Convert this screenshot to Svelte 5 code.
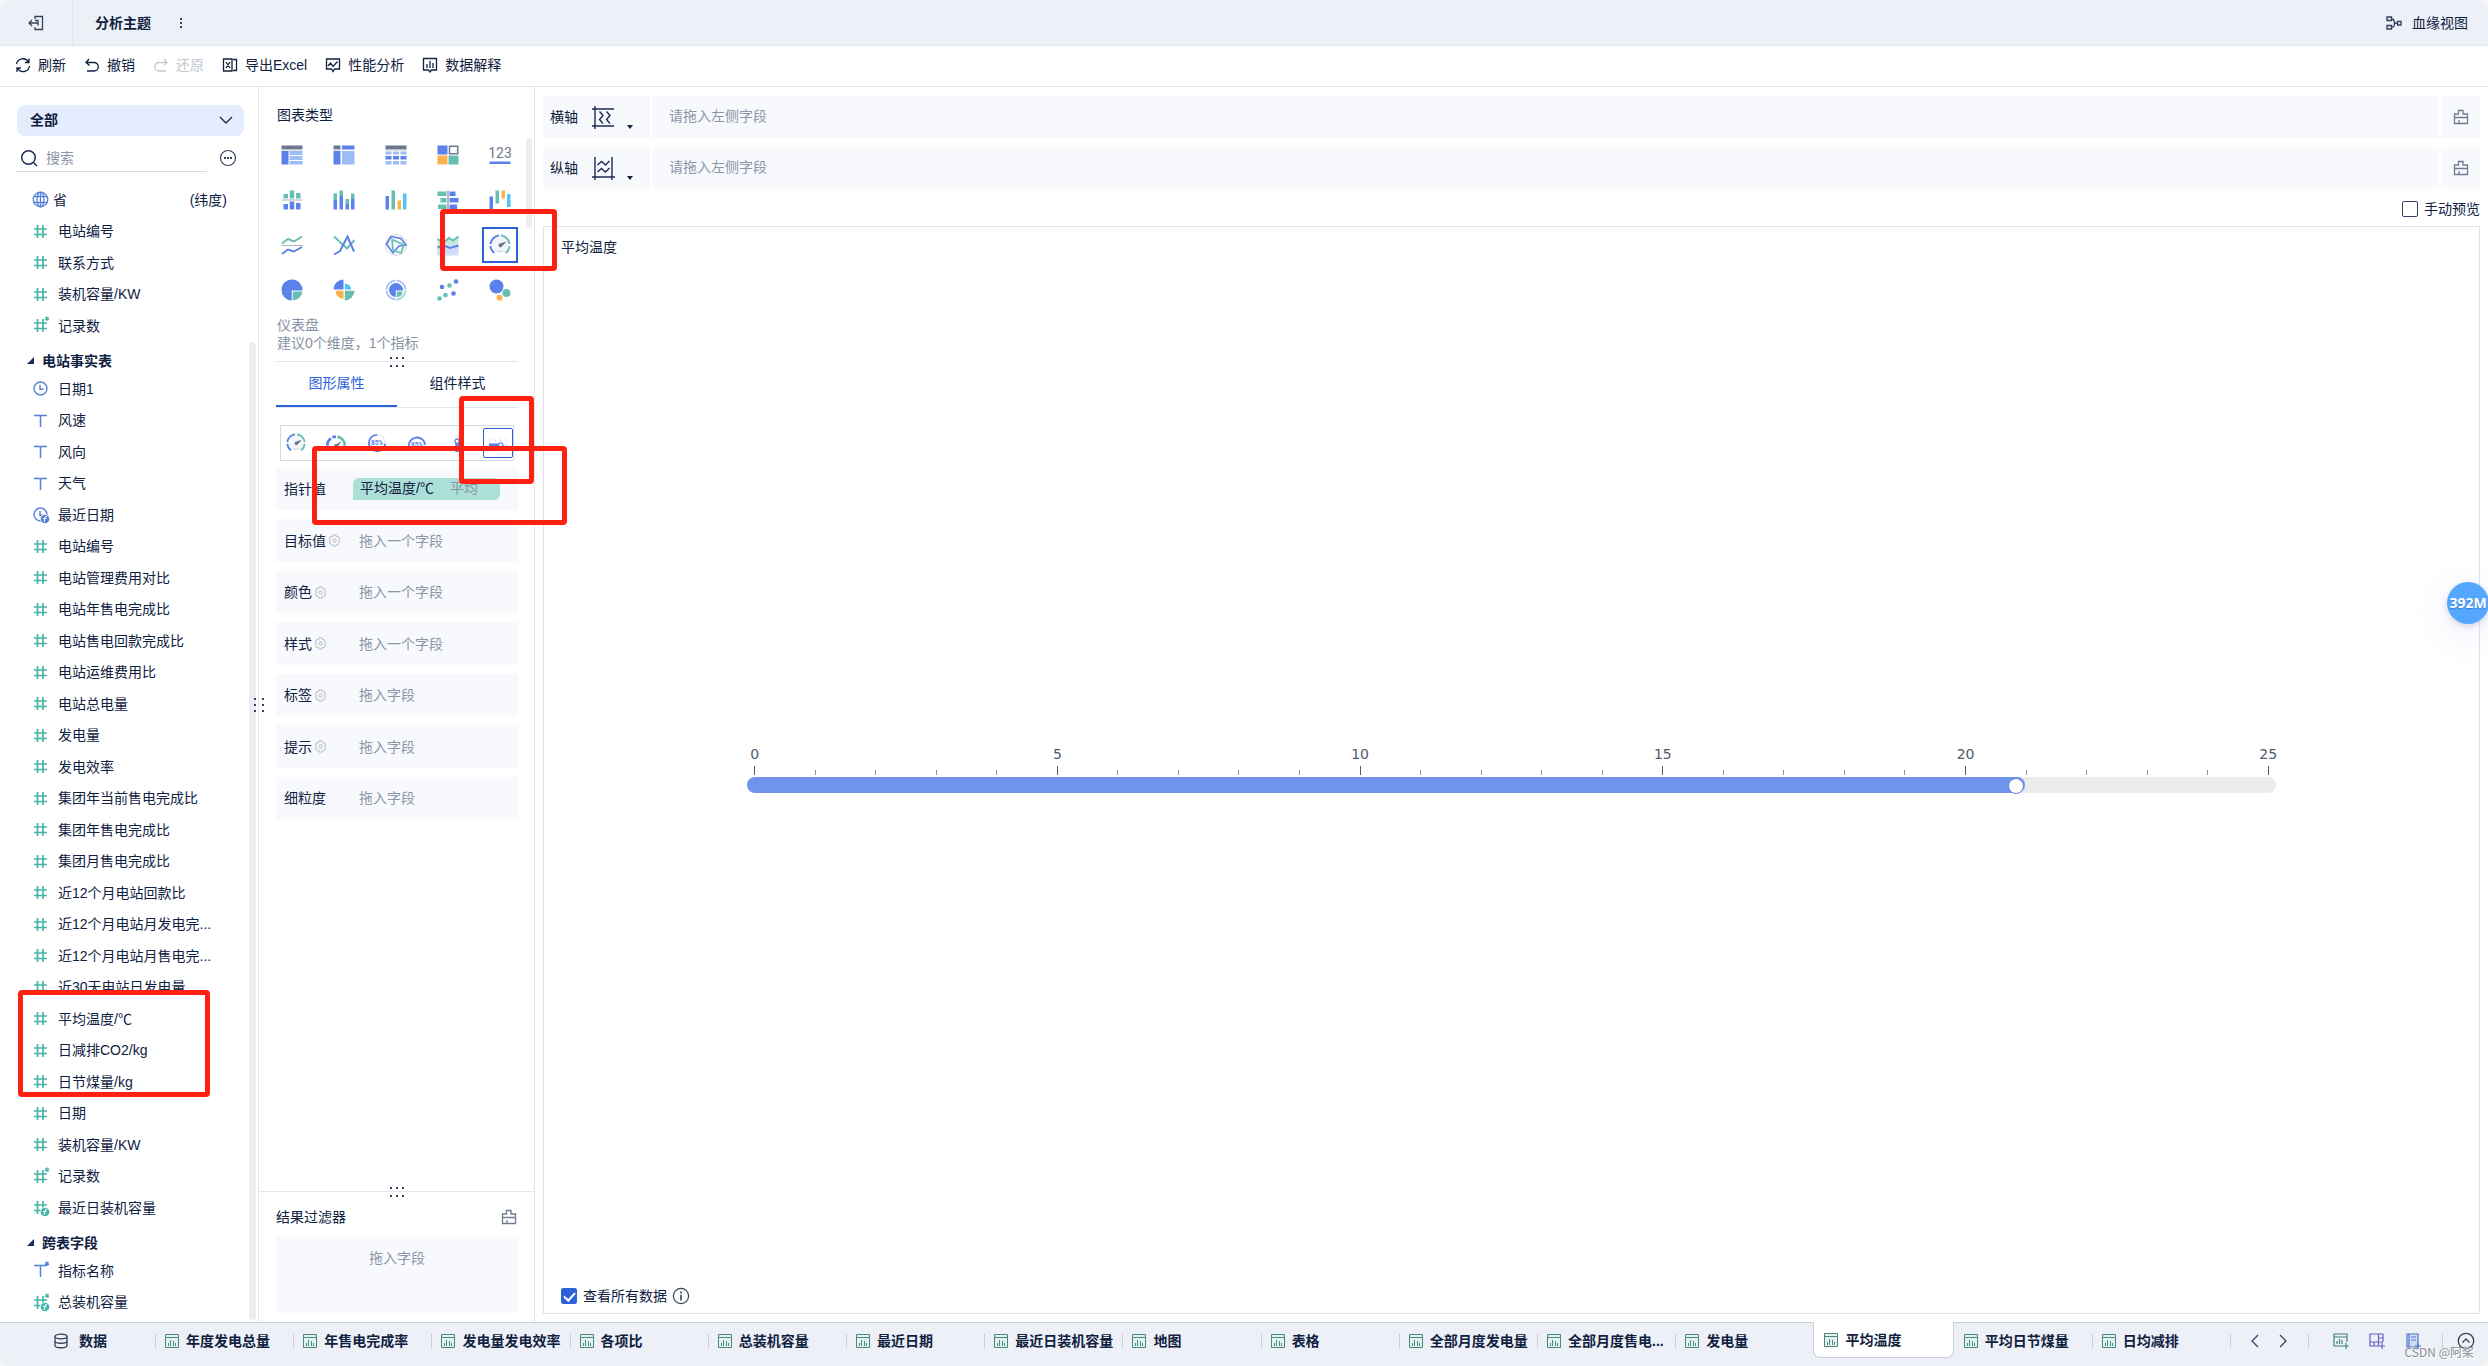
<script lang="ts">
  type Field = { icon: string; name: string; note?: string }
  type Group = { title?: string; fields: Field[] }

  const num = (name: string): Field => ({ icon: 'num', name })

  const groups: Group[] = [
    {
      fields: [
        { icon: 'globe', name: '省', note: '(纬度)' },
        num('电站编号'),
        num('联系方式'),
        num('装机容量/KW'),
        { icon: 'numStar', name: '记录数' },
      ],
    },
    {
      title: '电站事实表',
      fields: [
        { icon: 'clock', name: '日期1' },
        { icon: 'text', name: '风速' },
        { icon: 'text', name: '风向' },
        { icon: 'text', name: '天气' },
        { icon: 'clockF', name: '最近日期' },
        num('电站编号'),
        num('电站管理费用对比'),
        num('电站年售电完成比'),
        num('电站售电回款完成比'),
        num('电站运维费用比'),
        num('电站总电量'),
        num('发电量'),
        num('发电效率'),
        num('集团年当前售电完成比'),
        num('集团年售电完成比'),
        num('集团月售电完成比'),
        num('近12个月电站回款比'),
        num('近12个月电站月发电完...'),
        num('近12个月电站月售电完...'),
        num('近30天电站日发电量'),
        num('平均温度/℃'),
        num('日减排CO2/kg'),
        num('日节煤量/kg'),
        num('日期'),
        num('装机容量/KW'),
        { icon: 'numStar', name: '记录数' },
        { icon: 'numF', name: '最近日装机容量' },
      ],
    },
    {
      title: '跨表字段',
      fields: [
        { icon: 'textStar', name: '指标名称' },
        { icon: 'numStarF', name: '总装机容量' },
      ],
    },
  ]

  const B = '#5a82ea'
  const L = '#9dbbf5'
  const G = '#67bfb3'
  const O = '#fcb24c'
  const D = '#6b7890'
  const C = '#53c3f5'

  const r = (x: number, y: number, w: number, h: number, fill: string) =>
    `<rect x="${x}" y="${y}" width="${w}" height="${h}" fill="${fill}"/>`
  const line = (pts: string, stroke: string, w = 2) =>
    `<polyline points="${pts}" fill="none" stroke="${stroke}" stroke-width="${w}"/>`

  const hash = '<path d="M6.5 3v13M12 3v13M3 7h13M3 12.500h13" fill="none" stroke="#45b5a8" stroke-width="1.700"/>'
  const tee = '<path d="M3 4.500h13M9.500 4.500v11.500" fill="none" stroke="#5580d8" stroke-width="1.500"/>'
  const star = (c: string) =>
    `<path d="M16 .5v4.500M14 1.600l4 2.300M18 1.600l-4 2.300" stroke="${c}" stroke-width="1.200"/>`
  const func = (c: string) =>
    `<circle cx="14" cy="14" r="5" fill="#fff"/><circle cx="14" cy="14" r="4.300" fill="${c}"/><path d="M16 11.500q-2-.5-2.200 1.500l-.6 4M12 13.500h3.500" fill="none" stroke="#fff"/>`
  const clock = '<circle cx="9.500" cy="9.500" r="6.500" fill="none" stroke="#5580d8" stroke-width="1.400"/><path d="M9 6v4.300h3.500" fill="none" stroke="#5580d8" stroke-width="1.400"/>'

  const fieldIcons: Record<string, string> = {
    num: hash,
    numStar: hash + star('#45b5a8'),
    numF: hash + func('#45b5a8'),
    numStarF: hash + star('#45b5a8') + func('#45b5a8'),
    text: tee,
    textStar: tee + star('#5580d8'),
    clock,
    clockF: clock + func('#5580d8'),
    globe: '<g fill="none" stroke="#5580d8" stroke-width="1.300"><circle cx="9.500" cy="9.500" r="7.300"/><ellipse cx="9.500" cy="9.500" rx="3.500" ry="7.300"/><path d="M3 6.500h13M3 12.500h13M9.500 2v15"/></g>',
  }

  const dial = '<circle cx="11" cy="11" r="8" fill="#f3f5f8"/><path d="M10 1.500A9.500 9.500 0 0 0 1.500 10M1.500 12A9.500 9.500 0 0 0 5.500 19" fill="none" stroke="#5a82ea" stroke-width="2"/><path d="M12 1.500A9.500 9.500 0 0 1 20.500 10M20.500 12A9.500 9.500 0 0 1 16.500 19" fill="none" stroke="#67bfb3" stroke-width="2"/><path d="M17.500 7.500l-5 5.500a2 2 0 1 1-2-3.500z" fill="#6b7890"/><path d="M8 17.500h6" stroke="#ccd2dc"/>'

  const chartTypes = [
    { name: '分组表', svg: r(0.5, 1.5, 21, 4, D) + r(0.5, 5.5, 21, 1, '#c3c9d3') + r(0.5, 7, 7, 13.5, B) + r(8.5, 7, 13, 4, L) + r(8.5, 12, 13, 4, L) + r(8.5, 17, 13, 3.5, L) },
    { name: '交叉表', svg: r(0.5, 1.5, 7, 4, D) + r(0.5, 5.5, 7, 1, '#c3c9d3') + r(9, 1.5, 12.5, 4, B) + r(0.5, 7, 7, 13.5, B) + r(9, 7, 12.5, 13.5, L) },
    { name: '明细表', svg: r(0.5, 1.5, 21, 4, D) + r(0.5, 5.5, 21, 1, '#c3c9d3') + [0.5, 8, 15.5].map((x) => r(x, 7.5, 6, 3, L) + r(x, 12, 6, 3.5, B) + r(x, 17, 6, 3.5, L)).join('') },
    { name: '颜色表格', svg: r(0.5, 1.5, 10, 9, B) + '<rect x="12.500" y="2.300" width="8.200" height="7.400" fill="none" stroke="#6b7890" stroke-width="1.500"/>' + r(0.5, 11.5, 10, 9, O) + r(11.5, 11.5, 10, 9, G) },
    { name: '指标卡', svg: '<text x="11" y="13.500" text-anchor="middle" font-family="Roboto, sans-serif" font-size="14" fill="#6b7890">123</text>' + r(0.5, 17.5, 21, 2.5, B) },
    { name: '对比柱状图', svg: r(0.5, 10.5, 21, 1, '#aab2c0') + r(2.5, 5, 4.5, 4.5, G) + r(8.7, 1.5, 4.5, 8, G) + r(15, 4, 4.5, 5.5, G) + r(2.5, 15, 4.5, 5.5, B) + r(8.7, 12.5, 4.5, 8, B) + r(15, 14, 4.5, 6.5, B) },
    { name: '堆积柱状图', svg: [[0.5, 4.5, 11], [6.5, 1.5, 7], [12.5, 10, 15], [18, 4.5, 10]].map(([x, a, b]) => r(x, a, 3.5, b - a, G) + r(x, b, 3.5, 20.5 - b, B)).join('') },
    { name: '分组柱状图', svg: r(0.5, 7, 3.5, 13.5, B) + r(6.5, 1.5, 3.5, 19, G) + r(12.5, 11.5, 3.5, 9, O) + r(18, 4.5, 3.5, 16, C) },
    { name: '对比条形图', svg: r(10.5, 1.5, 1, 19, D) + r(0.5, 2.5, 9, 4.5, G) + r(3.5, 9, 6, 4.5, G) + r(1, 15.5, 8.5, 4.5, G) + r(12.5, 2.5, 6, 4.5, B) + r(12.5, 9, 9, 4.5, B) + r(12.5, 15.5, 7.5, 4.5, B) },
    { name: '瀑布图', svg: r(0.5, 7.5, 3.5, 13, B) + r(6.5, 1.5, 3.5, 13, G) + r(12.5, 1.5, 3.5, 8, O) + r(18, 5, 3.5, 13, C) },
    { name: '折线图', svg: line('1,9.5 7,5 13,7.5 21,2.5', G) + r(0.5, 11, 21, 1, '#aab2c0') + line('1,20 7,15.5 13,17.5 21,13', B) },
    { name: '范围面积图', svg: line('1,2.5 14,14.5 21.5,6', G) + line('1,20.5 7,17 14.5,2.5 21,17.5', B) },
    { name: '雷达图', svg: '<circle cx="11" cy="11" r="10.500" fill="#f8f9fb" stroke="#d6dae2"/><path d="M6 2.500l10 2 5 6.500-7 1-6 7L1.500 10z" fill="none" stroke="#5a82ea" stroke-width="1.700"/><path d="M7 5.500L19 11l-3 8-8-3z" fill="none" stroke="#67bfb3" stroke-width="1.700"/>' },
    { name: '面积图', svg: '<path d="M.5 4l6 4 6-4 4 2 5-4v8l-6 3-8-2-7 2z" fill="#c7e6e1"/><path d="M.5 13l6-2 7 3 8-3v10.500H.5z" fill="#cfdbf8"/>' + line('0.5,5 6,9 12,4 16,6.5 21.5,2.5', G) + line('0.5,13.500 7,11.500 13,14 21.500,11.500', B) },
    { name: '仪表盘', svg: dial },
    { name: '饼图', svg: '<path d="M10.700 11.500V21.500A10.500 10.500 0 1 1 21.500 11.500z" fill="#5a82ea"/><path d="M11.700 12.500h9.800a10 10 0 0 1-9.800 9z" fill="#67bfb3"/>' },
    { name: '玫瑰图', svg: '<path d="M10.500 10.500V.5a10 10 0 0 0-10 10z" fill="#5a82ea"/><path d="M11.800 10.500V4.500a7 6.500 0 0 1 6.500 6z" fill="#53c3f5"/><path d="M11.800 11.800h9.700a10 10 0 0 1-9.700 9.700z" fill="#67bfb3"/><path d="M10.500 11.800H2.500a8 8 0 0 0 8 8z" fill="#fcb24c"/>' },
    { name: '多层饼图', svg: '<circle cx="11" cy="11" r="9.500" fill="none" stroke="#b1c4f5" stroke-width="2"/><path d="M20.500 11.500a9.500 9.500 0 0 1-9 9" fill="none" stroke="#b3dfd9" stroke-width="2"/><path d="M11 0v3M11 19v3M0 11h3M19 11h3" stroke="#fff"/><path d="M10.700 11.500v6.500a7 7 0 1 1 7.300-6.500z" fill="#5a82ea"/><path d="M11.700 12.500h6a6 6 0 0 1-6 5.500z" fill="#67bfb3"/>' },
    { name: '散点图', svg: [[2.5, 19.5, G], [8.5, 16, G], [5, 8, B], [12.5, 6.5, G], [16.5, 14.5, B], [19, 2.5, B]].map(([x, y, c]) => `<circle cx="${x}" cy="${y}" r="2.300" fill="${c}"/>`).join('') },
    { name: '气泡图', svg: '<circle cx="7.500" cy="7.500" r="7" fill="#5a82ea"/><circle cx="17.500" cy="14" r="4" fill="#67bfb3"/><circle cx="10.500" cy="18.800" r="3" fill="#fcb24c"/>' },
  ]

  const percent = (y: number) =>
    `<text x="11" y="${y}" text-anchor="middle" font-family="Roboto, sans-serif" font-size="7" font-weight="700" fill="#5a82ea">85%</text>`

  const gaugeStyles = [
    { name: '多指针仪表盘', svg: dial },
    { name: '半圆仪表盘', svg: '<path d="M1.500 14A9.500 9.500 0 0 1 5.500 6M7 5A9.500 9.500 0 0 1 11 4" fill="none" stroke="#5a82ea" stroke-width="3"/><path d="M12.500 4A9.500 9.500 0 0 1 20.500 14" fill="none" stroke="#67bfb3" stroke-width="3"/><path d="M17 8.500l-4 6.500-3-1.500z" fill="#6b7890"/><circle cx="11" cy="14" r="2" fill="#6b7890"/>' },
    { name: '百分比圆环', svg: '<circle cx="11" cy="11" r="9" fill="none" stroke="#e9ecf1" stroke-width="2"/><path d="M11 2a9 9 0 1 0 9 10" fill="none" stroke="#5a82ea" stroke-width="2"/>' + percent(13.5) },
    { name: '百分比刻度槽', svg: '<path d="M2 15A9 9 0 1 1 20 13" fill="none" stroke="#5a82ea" stroke-width="2"/>' + percent(15) },
    { name: '竖向试管', svg: '<path d="M10 2v18" stroke="#e9ecf1" stroke-width="4"/><path d="M10 9v12" stroke="#5a82ea" stroke-width="4"/><circle cx="10" cy="9" r="2.300" fill="#fff" stroke="#5a82ea" stroke-width="1.300"/><path d="M13 3h3M13 8h3M13 13h3" stroke="#d4d8e0"/>' },
    { name: '横向试管', svg: '<path d="M1 13h20" stroke="#e9ecf1" stroke-width="3"/><path d="M1 13h13" stroke="#5a82ea" stroke-width="3"/><circle cx="14" cy="13" r="2.300" fill="#fff" stroke="#5a82ea" stroke-width="1.300"/><path d="M2 6v4M8 7v3M14 6v4M20 6v4" stroke="#d4d8e0"/>' },
  ]

  const shelves = [
    { label: '目标值', gear: true, hint: '拖入一个字段' },
    { label: '颜色', gear: true, hint: '拖入一个字段' },
    { label: '样式', gear: true, hint: '拖入一个字段' },
    { label: '标签', gear: true, hint: '拖入字段' },
    { label: '提示', gear: true, hint: '拖入字段' },
    { label: '细粒度', gear: false, hint: '拖入字段' },
  ]

  const tools = [
    { name: '刷新', path: 'M1.500 7A6.500 6.500 0 0 1 13.500 5M14.500 9A6.500 6.500 0 0 1 2.500 11.500M14 1.500V5.500h-4M2 15v-4h4' },
    { name: '撤销', path: 'M5 2L2 5.500 5.500 8.500M2 5.500h8a4 4 0 0 1 0 8.500H3' },
    { name: '还原', path: 'M11 2l3 3.500-3.500 3M14 5.500H6A4 4 0 0 0 6 14h7', disabled: true },
    { name: '导出Excel', path: 'M10 2H1.500v12H10zM11 2.500h3.500v11H11M4 5l4 6M8 5l-4 6' },
    { name: '性能分析', path: 'M1.500 2h13v10h-5L8 14.500 6.500 12h-5zM3 9l2.500-3L8 9.500l4.500-5' },
    { name: '数据解释', path: 'M1.500 1.500h13V13h-5L8 15l-1.500-2h-5zM5 7v4M8 4v7M11 6v5' },
  ]

  const axes = [
    { name: '横轴', path: 'M3 0v23M0 3h22M0 20h22M7.500 5.500l3.500 4-3.500 4 3.500 4M14.500 5.500l3.500 4-3.500 4 3.500 4' },
    { name: '纵轴', path: 'M3 0v23M20 0v23M0 20h23M5.500 8l4-3.500 4 3.500 4-4M5.500 15l4-3.500 4 3.500 4-4' },
  ]

  const sheets = [
    '年度发电总量', '年售电完成率', '发电量发电效率', '各项比', '总装机容量',
    '最近日期', '最近日装机容量', '地图', '表格', '全部月度发电量',
    '全部月度售电...', '发电量', '平均温度', '平均日节煤量', '日均减排',
  ]

  const max = 25
  const value = 20.85
  const ticks = Array.from({ length: max + 1 }, (_, i) => i)

  let chartType = $state('仪表盘')
  let gaugeStyle = $state('横向试管')
  let sheet = $state('平均温度')
  let manual = $state(false)
  let showAll = $state(true)
</script>

{#snippet broom()}
  <svg class="i16" viewBox="0 0 16 16" fill="none" stroke="#6f7b90" stroke-width="1.3">
    <path d="M1.500 5h4V1.500h4.500V5h4.500v9.500h-13zM1.500 8.500h13M6 14.500V11" />
  </svg>
{/snippet}

{#snippet grip()}
  <span class="grip">{#each [0, 1, 2, 3, 4, 5] as d (d)}<i></i>{/each}</span>
{/snippet}

<div class="app">
  <header class="topbar">
    <button class="exit" aria-label="退出">
      <svg class="i16" viewBox="0 0 16 16" fill="none" stroke="#34425c" stroke-width="1.3">
        <path d="M7 4V1.500h7.500v13H7V12M1 8h9M4 5L1 8l3 3M7 5.500h3v5" />
      </svg>
    </button>
    <h1>分析主题</h1>
    <button class="dots" aria-label="更多">
      <svg class="i16" viewBox="0 0 16 16" fill="#34425c"><path d="M7 3h2v2H7zM7 7h2v2H7zM7 11h2v2H7z" /></svg>
    </button>
    <button class="lineage">
      <svg class="i16" viewBox="0 0 16 16" fill="none" stroke="#34425c" stroke-width="1.4">
        <path d="M1 2h4.500v3.500H1zM1 10.500h4.500V14H1zM11.500 6.500H15V10h-3.500zM5.500 4q3 0 3 4.200t-3 4M8.500 8.200h3" />
      </svg>
      血缘视图
    </button>
  </header>

  <nav class="toolbar">
    {#each tools as tool (tool.name)}
      <button disabled={tool.disabled}>
        <svg class="i16" viewBox="0 0 16 16" fill="none" stroke="currentColor" stroke-width="1.3"><path d={tool.path} /></svg>
        {tool.name}
      </button>
    {/each}
  </nav>

  <main>
    <aside class="fields">
      <label class="scope">
        <select aria-label="字段范围"><option>全部</option></select>
        <svg class="i16" viewBox="0 0 16 16" fill="none" stroke="#1b2d50" stroke-width="1.4"><path d="M2 5l6 6 6-6" /></svg>
      </label>
      <div class="search">
        <label>
          <svg viewBox="0 0 18 18" fill="none" stroke="#1b2d50" stroke-width="1.5"><circle cx="8.5" cy="8.5" r="6.8" /><path d="M13.500 13.500l3.500 3.500" /></svg>
          <input type="search" placeholder="搜索" aria-label="搜索" />
        </label>
        <button aria-label="更多选项">
          <svg viewBox="0 0 18 18" fill="none" stroke="#34425c" stroke-width="1.2"><circle cx="9" cy="9" r="7.5" /><path d="M5 9h2M8 9h2M11 9h2" stroke-width="1.8" /></svg>
        </button>
      </div>
      <div class="tree">
        <div class="list">
          {#each groups as group, g (g)}
            {#if group.title}
              <h2><svg viewBox="0 0 7 7"><path d="M7 0v7H0z" fill="#1b2d50" /></svg>{group.title}</h2>
            {/if}
            <ul>
              {#each group.fields as field, f (f)}
                <li class:geo={field.icon === 'globe'}>
                  <svg viewBox="0 0 19 19">{@html fieldIcons[field.icon]}</svg>
                  <span>{field.name}</span>
                  {#if field.note}<em>{field.note}</em>{/if}
                </li>
              {/each}
            </ul>
          {/each}
        </div>
        <div class="scroll"></div>
      </div>
      <div class="grip-side">{@render grip()}</div>
    </aside>

    <section class="config">
      <h3>图表类型</h3>
      <div class="types">
        <div class="type-grid">
          {#each chartTypes as type (type.name)}
            <button class:selected={type.name === chartType} aria-label={type.name} onclick={() => (chartType = type.name)}>
              <svg viewBox="0 0 22 22">{@html type.svg}</svg>
            </button>
          {/each}
        </div>
        <div class="scroll"></div>
      </div>
      <p class="desc">仪表盘<br />建议0个维度，1个指标</p>
      <div class="split">{@render grip()}</div>
      <div class="tabs">
        <button class="on">图形属性</button>
        <button>组件样式</button>
      </div>
      <div class="styles">
        {#each gaugeStyles as style (style.name)}
          <button class:selected={style.name === gaugeStyle} aria-label={style.name} onclick={() => (gaugeStyle = style.name)}>
            <svg viewBox="0 0 22 22">{@html style.svg}</svg>
          </button>
        {/each}
      </div>
      <div class="shelves">
        <div class="shelf">
          <span class="name">指针值</span>
          <span class="pill">平均温度/℃ <em>平均</em></span>
        </div>
        {#each shelves as shelf (shelf.label)}
          <div class="shelf">
            <span class="name">
              {shelf.label}
              {#if shelf.gear}
                <svg viewBox="0 0 14 14" fill="none" stroke="#c3c8d1" stroke-width="1.2"><path d="M5.500 1h3l.5 1.700 2 .1 1.500 2.600L11.500 7l1 1.600L11 11.200l-2 .1L8.500 13h-3L5 11.300l-2-.1L1.500 8.600l1-1.600-1-1.600L3 2.800l2-.1z" /><circle cx="7" cy="7" r="1.8" /></svg>
              {/if}
            </span>
            <span class="hint">{shelf.hint}</span>
          </div>
        {/each}
      </div>
      <div class="filter">
        <div class="split wide">{@render grip()}</div>
        <div class="filter-head">
          <span>结果过滤器</span>
          {@render broom()}
        </div>
        <div class="drop">拖入字段</div>
      </div>
    </section>

    <section class="stage">
      {#each axes as axis (axis.name)}
        <div class="axis">
          <div class="axis-name">
            <span>{axis.name}</span>
            <button aria-label="{axis.name}设置">
              <svg viewBox="0 0 23 23" fill="none" stroke="#1b2d50" stroke-width="1.4"><path d={axis.path} /></svg>
              <svg class="caret" viewBox="0 0 6 4"><path d="M0 0h6L3 4z" fill="#0f2145" /></svg>
            </button>
          </div>
          <div class="axis-drop">请拖入左侧字段</div>
          <button class="axis-clear" aria-label="清空{axis.name}">{@render broom()}</button>
        </div>
      {/each}
      <div class="preview">
        <label><input type="checkbox" bind:checked={manual} />手动预览</label>
      </div>
      <div class="canvas">
        <h3>平均温度</h3>
        <div class="chart">
          <div class="ticks">
            {#each ticks as t (t)}
              <div class="tick" class:major={t % 5 === 0}>
                {#if t % 5 === 0}<span>{t}</span>{/if}
                <i></i>
              </div>
            {/each}
          </div>
          <div class="track">
            <div class="scale"><div class="fill" style="width: {(value / max) * 100}%"></div></div>
          </div>
        </div>
        <div class="all">
          <label><input type="checkbox" bind:checked={showAll} />查看所有数据</label>
          <svg viewBox="0 0 18 18" fill="none" stroke="#34425c" stroke-width="1.2"><circle cx="9" cy="9" r="7.6" /><path d="M9 4.500v2M9 7.800v5.700" stroke-width="1.600" /></svg>
        </div>
      </div>
    </section>
  </main>

  <footer>
    <button class="data">
      <svg class="i16" viewBox="0 0 16 16" fill="none" stroke="#34425c" stroke-width="1.3"><ellipse cx="8" cy="3.500" rx="6" ry="2.300" /><path d="M2 3.500v9c0 3 12 3 12 0v-9M2 8c0 3 12 3 12 0" /></svg>
      数据
    </button>
    <div class="sheets">
      {#each sheets as name (name)}
        <button class:active={name === sheet} onclick={() => (sheet = name)}>
          <svg viewBox="0 0 14 14" fill="none" stroke="#4b877e"><path d="M.5.5h13v13H.5z" fill="#e3f1ef" /><path d="M.5 3.500h13" /><path d="M3.500 12V9M5.500 12V6M8.500 12V7M10.500 12V9" stroke="#3f9184" /></svg>
          {name}
        </button>
      {/each}
    </div>
    <div class="pager">
      <button aria-label="上一页"><svg viewBox="0 0 8 14"><path d="M7 1L1 7l6 6" /></svg></button>
      <button aria-label="下一页"><svg viewBox="0 0 8 14"><path d="M1 1l6 6-6 6" /></svg></button>
    </div>
    <div class="adders">
      <button aria-label="添加组件"><svg class="i16" viewBox="0 0 16 16" fill="none" stroke="#3f8578" stroke-width="1.2"><path d="M10 13H1V1h13v8M1 4h13M4 11V8M6.500 11V6M9 11V7M13 10v6M10 13h6" /></svg></button>
      <button aria-label="添加仪表板"><svg class="i16" viewBox="0 0 16 16" fill="none" stroke="#6a5cc0" stroke-width="1.2"><path d="M10 13H1V1h13v8M1 9h13M9.500 1v12M9.500 5H14M5 9v4M13 10v6M10 13h6" /></svg></button>
      <button aria-label="添加分析文档"><svg class="i16" viewBox="0 0 16 16" fill="none" stroke="#5478c4" stroke-width="1.2"><path d="M2 1h11v13H2z" fill="#cfdbf5" /><path d="M4 1v13M6 4h5M6 7h5M13 10v6M10 13h6" /></svg></button>
    </div>
    <button class="up" aria-label="展开"><svg viewBox="0 0 18 18" fill="none" stroke="#34425c" stroke-width="1.3"><circle cx="9" cy="9" r="7.700" /><path d="M5.500 10.500L9 7l3.500 3.500" /></svg></button>
  </footer>

  <div class="ball">392M</div>
  <div class="watermark">CSDN @阿桨</div>
  <div class="mark mark-type"></div>
  <div class="mark mark-style"></div>
  <div class="mark mark-value"></div>
  <div class="mark mark-fields"></div>
</div>

<style>
  :global(body) { background: #f6f6f6; }
  .app { position: relative; display: flex; flex-direction: column; min-height: 100vh; overflow: hidden; border-radius: 10px; background: #fff; color: #10213f; font: 14px/20px 'Liberation Sans', 'Noto Sans CJK SC', sans-serif; }
  .app * { box-sizing: border-box; }
  button, input, select { margin: 0; padding: 0; border: 0; background: none; color: inherit; font: inherit; }
  button { cursor: pointer; }
  h1, h2, h3, p, ul { margin: 0; padding: 0; list-style: none; font-size: 14px; }
  h3 { font-weight: 400; }
  em { font-style: normal; }
  svg { display: block; flex-shrink: 0; }
  .i16 { width: 16px; height: 16px; }

  .topbar { display: flex; align-items: center; height: 46px; background: #edf0f6; border-bottom: 1px solid #e2e5ed; }
  .exit { display: flex; align-items: center; align-self: stretch; width: 73px; padding-left: 28px; border-right: 1px solid #e2e5ed; }
  h1 { margin-left: 22px; }
  .dots { margin-left: 22px; }
  .lineage { display: flex; align-items: center; gap: 10px; margin: 0 20px 0 auto; }

  .toolbar { display: flex; gap: 18px; height: 41px; padding: 0 15px; border-bottom: 1px solid #e2e5ed; }
  .toolbar button { display: flex; align-items: center; gap: 7px; padding-bottom: 2px; }
  .toolbar button:disabled { color: #c3c8d1; }

  main { display: flex; flex: 1; }
  .scroll { width: 7px; border-radius: 4px; background: #ebedf2; }
  .grip { display: grid; grid-template-columns: repeat(3, 2px); gap: 6px 4px; }
  .grip i { width: 2px; height: 2px; background: #34425c; }

  .fields { position: relative; display: flex; flex-direction: column; width: 259px; padding-top: 18px; border-right: 1px solid #e2e5ed; }
  .scope { display: flex; align-items: center; height: 31px; margin: 0 14px 0 17px; padding: 0 10px 2px 13px; border-radius: 8px; background: #e4edfe; }
  .scope select { flex: 1; appearance: none; font-weight: 700; outline: 0; }
  .search { display: flex; justify-content: space-between; margin: 8px 21px 0 16px; }
  .search label { display: flex; align-items: center; gap: 8px; width: 191px; height: 28px; padding-left: 4px; border-bottom: 1px solid #d5d9e2; }
  .search input { width: 120px; outline: 0; }
  .search input::placeholder { color: #8b95a7; }
  .search svg { width: 18px; height: 18px; }
  .tree { display: flex; flex: 1; padding-top: 12px; }
  .list { flex: 1; }
  .tree .scroll { margin: 158px 2px 2px 0; }
  li { display: flex; align-items: center; gap: 8px; height: 31px; padding-left: 31px; white-space: nowrap; }
  li:nth-child(even) { height: 32px; }
  li svg { width: 19px; height: 19px; }
  li em { margin-left: auto; padding-right: 22px; }
  .geo { gap: 3px; }
  h2 { display: flex; align-items: center; gap: 8px; height: 32px; padding: 7px 0 0 27px; }
  h2 svg { width: 7px; height: 7px; }
  .grip-side { position: absolute; top: 50%; right: -6px; transform: translateY(-50%); }
  .grip-side .grip { grid-template-columns: repeat(2, 2px); gap: 4px 6px; }

  .config { display: flex; flex-direction: column; width: 276px; padding-top: 18px; border-right: 1px solid #e2e5ed; }
  .config h3 { padding-left: 18px; }
  .types { display: flex; justify-content: space-between; margin-top: 7px; padding: 0 2px 0 7px; }
  .type-grid { display: grid; grid-template-columns: repeat(5, 52px); grid-auto-rows: 45px; place-items: center; }
  .type-grid button { padding: 7px; }
  .type-grid .selected { padding: 5px; border: 2px solid #2d61d8; }
  .type-grid svg { width: 22px; height: 22px; }
  .types .scroll { height: 90px; margin-top: 6px; }
  .desc { margin: 4px 17px 0 18px; color: #8892a4; line-height: 18px; }
  .split { display: flex; justify-content: center; margin: 4px 16px 0 17px; padding-top: 1px; background: linear-gradient(#e2e5ed, #e2e5ed) 0 5px / 100% 1px no-repeat; }
  .split.wide { margin: 0; }
  .tabs { display: flex; height: 41px; margin: 0 16px 0 17px; border-bottom: 1px solid #e2e5ed; }
  .tabs button { flex: 1; padding-bottom: 8px; }
  .tabs .on { color: #2d61d8; border-bottom: 2px solid #2d61d8; padding-bottom: 6px; }
  .styles { display: flex; align-items: center; justify-content: space-between; height: 36px; margin: 17px 20px 0 21px; border: 1px solid #d5d9e3; }
  .styles button { display: grid; place-items: center; width: 30px; height: 30px; border-radius: 2px; }
  .styles .selected { border: 1px solid #2d61d8; }
  .styles svg { width: 20px; height: 20px; }
  .shelves { display: grid; gap: 9px; margin: 7px 16px 0 17px; }
  .shelf { display: flex; align-items: center; height: 42px; padding-left: 8px; background: #f8f9fd; }
  .shelf:nth-child(even) { height: 43px; }
  .name { display: flex; align-items: center; gap: 2px; width: 75px; }
  .name svg { width: 13px; height: 13px; }
  .hint { color: #8b95a7; }
  .pill { display: flex; justify-content: space-between; width: 147px; height: 22px; margin-left: -6px; padding: 0 22px 0 7px; border-radius: 6px 6px 6px 0; background: #addfd9; }
  .pill em { color: #82979f; }
  .filter { margin-top: auto; padding-bottom: 9px; }
  .filter-head { display: flex; align-items: center; justify-content: space-between; height: 39px; padding: 0 17px; }
  .drop { height: 76px; margin: 1px 16px 0 17px; padding-top: 11px; background: #f8f9fd; color: #8b95a7; text-align: center; }

  .stage { display: flex; flex: 1; flex-direction: column; min-width: 0; padding: 9px 8px 8px; }
  .axis { display: flex; gap: 2px; height: 42px; margin-bottom: 9px; }
  .axis > * { background: #f8f9fd; }
  .axis-name { display: flex; align-items: center; width: 107px; padding-left: 7px; }
  .axis-name button { display: flex; align-items: flex-end; gap: 12px; margin-left: 14px; }
  .axis-name svg { width: 23px; height: 23px; }
  .axis-name .caret { width: 6px; height: 4px; }
  .axis-drop { flex: 1; padding: 10px 17px; color: #8b95a7; }
  .axis-clear { display: grid; place-items: center; width: 39px; }
  label { cursor: pointer; }
  .preview { display: flex; justify-content: flex-end; padding: 1px 0 7px; }
  .preview label, .all label { display: flex; align-items: center; gap: 6px; }
  input[type='checkbox'] { width: 16px; height: 16px; appearance: none; border: 1px solid #34425c; border-radius: 2px; background: #fff; }
  input[type='checkbox']:checked { border-color: #2d61d8; background: conic-gradient(#2d61d8 0 0); }
  input[type='checkbox']:checked::after { content: ''; display: block; width: 5px; height: 9px; margin: 1px auto 0; border: solid #fff; border-width: 0 2px 2px 0; transform: rotate(42deg); }
  .canvas { display: flex; flex: 1; flex-direction: column; justify-content: space-between; border: 1px solid #e0e3ec; padding: 10px 17px 7px; }
  .chart { margin: 0 10%; padding-bottom: 5px; }
  .ticks { display: flex; align-items: flex-end; justify-content: space-between; padding: 0 7px; }
  .tick { display: flex; flex-direction: column; align-items: center; gap: 3px; width: 1px; color: #505b6e; font: 14px/18px 'DejaVu Sans', sans-serif; }
  .tick i { flex-shrink: 0; width: 1px; height: 5px; background: #8d95a3; }
  .tick.major i { height: 9px; background: #505b6e; }
  .track { margin-top: 2px; padding: 0 8px; border-radius: 8px; background: #ececec; }
  .scale { height: 16px; }
  .fill { position: relative; height: 16px; background: #7093ee; }
  .fill::before { content: ''; position: absolute; inset: 0 -8px 0 -8px; border-radius: 8px; background: #7093ee; }
  .fill::after { content: ''; position: absolute; top: 1px; right: -7px; width: 14px; height: 14px; border: 1px solid #5f83e2; border-radius: 50%; background: #fff; }
  .all { display: flex; align-items: center; gap: 5px; }
  .all svg { width: 18px; height: 18px; }

  footer { display: flex; height: 44px; padding-bottom: 8px; border-top: 1px solid #c9ced9; background: #edf0f6; }
  footer button { display: flex; align-items: center; }
  .data { gap: 10px; width: 155px; padding-left: 53px; font-weight: 700; }
  .sheets { display: flex; flex: 1; min-width: 0; }
  .sheets button { position: relative; flex: 1; gap: 7px; min-width: 0; padding-left: 10px; font-weight: 700; white-space: nowrap; }
  .sheets button::before, .pager::before, .adders::before, .up::before { content: ''; position: absolute; left: 0; top: 11px; width: 1px; height: 14px; background: #c9ced9; }
  .sheets svg { width: 14px; height: 14px; }
  .sheets .active { margin-top: -1px; border: solid #c9ced9; border-width: 0 1px 1px; border-radius: 0 0 7px 7px; background: #fff; }
  .sheets .active::before, .sheets .active + button::before { display: none; }
  .pager, .adders, .up { position: relative; display: flex; }
  .pager { gap: 20px; width: 78px; padding-left: 21px; }
  .pager svg { width: 8px; height: 14px; fill: none; stroke: #34425c; stroke-width: 1.3; }
  .adders { gap: 20px; width: 134px; padding-left: 25px; }
  .up { width: 46px; padding-left: 15px; }
  .up svg { width: 18px; height: 18px; }

  .ball { position: absolute; top: 582px; right: -1px; width: 42px; height: 42px; border-radius: 50%; background: #55a6ff; box-shadow: 0 2px 6px rgba(60, 70, 120, 0.2), 0 10px 40px rgba(90, 90, 220, 0.12); color: #fff; font: 700 14px/42px 'Noto Sans', sans-serif; text-align: center; text-shadow: 0 1px 1px #3a7fd0; }
  .watermark { position: absolute; right: 14px; bottom: 5px; color: #8b8d92; font: 12px/18px 'Noto Sans CJK SC', sans-serif; text-shadow: 1px 1px 0 #fff; }
  .mark { position: absolute; border: 5px solid #ff2012; border-radius: 4px; pointer-events: none; }
  .mark-type { left: 440px; top: 209px; width: 117px; height: 62px; }
  .mark-style { left: 459px; top: 396px; width: 75px; height: 88px; }
  .mark-value { left: 312px; top: 446px; width: 255px; height: 79px; }
  .mark-fields { left: 18px; top: 990px; width: 192px; height: 107px; }

  @media (min-width: 1600px) {
    .chart { margin: 0 calc(10% - 4px); }
  }
</style>
